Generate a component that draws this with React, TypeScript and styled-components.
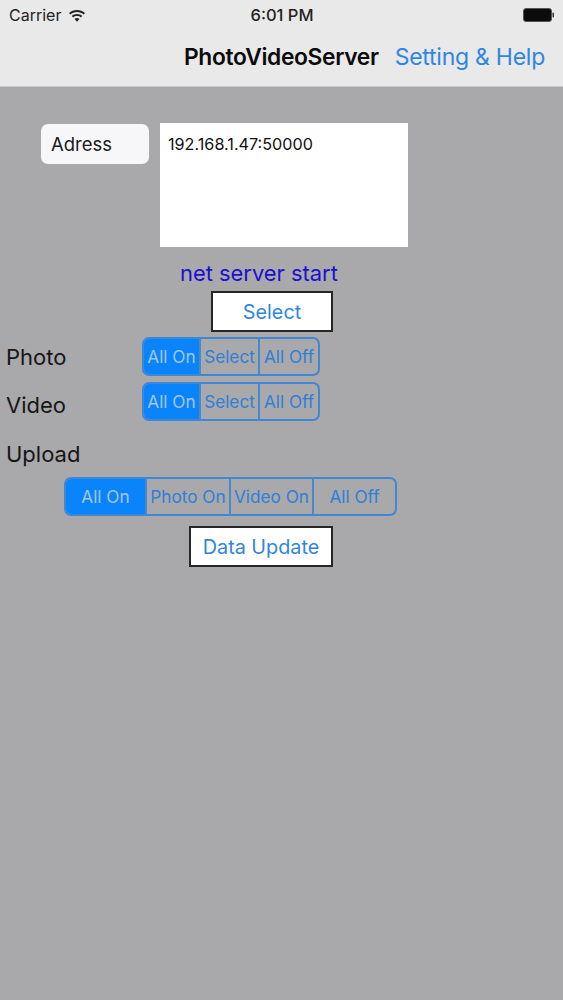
import React from "react";
import styled, { createGlobalStyle } from "styled-components";

const Global = createGlobalStyle`
  html, body { margin: 0; padding: 0; background: #a9a8aa; }
  body { font-family: Inter, "Liberation Sans", sans-serif; }
`;

const Screen = styled.div`
  width: 563px;
  height: 1000px;
  display: flex;
  flex-direction: column;
  background: #a9a8aa;
  overflow: hidden;
`;

const Header = styled.header`
  height: 87px;
  flex: none;
  box-sizing: border-box;
  background: #e9e9ea;
  border-bottom: 1px solid #c9c9ca;
  display: flex;
  flex-direction: column;
`;

const StatusBar = styled.div`
  height: 29px;
  display: grid;
  grid-template-columns: 1fr auto 1fr;
  align-items: center;
  padding: 0 8px 0 9px;
  font-size: 16px;
  color: #222;
`;

const StatusLeft = styled.div`
  display: flex;
  align-items: center;
  gap: 7px;
`;

const StatusTime = styled.div`
  font-weight: 500;
  font-size: 16.5px;
`;

const StatusRight = styled.div`
  display: flex;
  justify-content: flex-end;
`;

const NavBar = styled.nav`
  flex: 1;
  display: flex;
  justify-content: flex-end;
  align-items: center;
  gap: 16px;
  padding: 0 18px 2px 0;
`;

const NavTitle = styled.div`
  font-size: 22.8px;
  font-weight: 600;
  letter-spacing: -0.35px;
  color: #0c0c0c;
`;

const NavAction = styled.div`
  font-size: 23px;
  letter-spacing: -0.25px;
  color: #2f86e0;
`;

const Content = styled.main`
  flex: 1;
  display: flex;
  flex-direction: column;
`;

const AddressRow = styled.div`
  display: flex;
  align-items: flex-start;
  gap: 11px;
  padding: 36px 0 0 41px;
`;

const AddressLabel = styled.div`
  width: 108px;
  height: 40px;
  box-sizing: border-box;
  margin-top: 1px;
  padding-left: 10px;
  display: flex;
  align-items: center;
  background: #f7f7f9;
  border-radius: 7px;
  font-size: 18.5px;
  color: #1a1a1a;
`;

const AddressBox = styled.div`
  width: 248px;
  height: 124px;
  box-sizing: border-box;
  background: #fff;
  padding: 12px 8px;
  font-size: 16.2px;
  line-height: 19px;
  color: #111;
`;

const ServerStatus = styled.div`
  margin: 13px 0 0 180px;
  height: 26px;
  line-height: 26px;
  font-size: 21.9px;
  color: #1c10cf;
  white-space: nowrap;
`;

const BoxButton = styled.div<{ $left: number; $width: number; $top: number }>`
  margin: ${(p) => p.$top}px 0 0 ${(p) => p.$left}px;
  width: ${(p) => p.$width}px;
  height: 41px;
  box-sizing: border-box;
  border: 2px solid #262626;
  background: #fff;
  display: flex;
  align-items: center;
  justify-content: center;
  font-size: 19.8px;
  color: #2f86e0;
`;

const SegmentRow = styled.div<{ $top: number }>`
  display: flex;
  align-items: center;
  height: 39px;
  margin-top: ${(p) => p.$top}px;
  padding-left: 6px;
`;

const RowLabel = styled.div<{ $shift?: number }>`
  width: 136px;
  font-size: 22px;
  color: #161616;
  padding-top: ${(p) => p.$shift ?? 0}px;
`;

const UploadLabel = styled(RowLabel)`
  margin: 20px 0 0 6px;
  height: 27px;
  line-height: 27px;
`;

const Segmented = styled.div<{ $left?: number; $top?: number; $cols: string; $width: number }>`
  width: ${(p) => p.$width}px;
  height: 39px;
  box-sizing: border-box;
  margin: ${(p) => p.$top ?? 0}px 0 0 ${(p) => p.$left ?? 0}px;
  display: grid;
  grid-template-columns: ${(p) => p.$cols};
  border: 2px solid #3f88d8;
  border-radius: 7px;
  overflow: hidden;
`;

const Segment = styled.div<{ $active?: boolean }>`
  display: flex;
  align-items: center;
  justify-content: center;
  white-space: nowrap;
  font-size: 17.2px;
  background: ${(p) => (p.$active ? "#0a84fb" : "transparent")};
  color: ${(p) => (p.$active ? "#a6c4e2" : "#2f7fd8")};
  & + & {
    border-left: 2px solid #4a88cc;
  }
`;

const Wifi = () => (
  <svg width="18" height="14" viewBox="0 0 18 14" fill="#222">
    <path d="M9 2C5.900 2 3.100 3.100 1 5l1.300 1.500C4.100 5 6.400 4 9 4s4.900 1 6.700 2.500L17 5c-2.100-1.900-4.900-3-8-3z" />
    <path d="M9 6c-2 0-3.800.7-5.200 1.900l1.300 1.500C6.100 8.500 7.500 8 9 8s2.900.5 3.900 1.400l1.300-1.500C12.800 6.700 11 6 9 6z" />
    <path d="M9 10c-1 0-1.900.3-2.500.9L9 13.700l2.500-2.800C10.900 10.300 10 10 9 10z" />
  </svg>
);

const Battery = () => (
  <svg width="32" height="14" viewBox="0 0 32 14">
    <rect x="0.500" y="0.500" width="28" height="13" rx="2.500" fill="#0c0c0c" stroke="#555" />
    <rect x="29.500" y="4.500" width="1.500" height="5" rx="0.700" fill="#333" />
  </svg>
);

const triple = "55px 59px 1fr";
const quad = "79px 84px 83px 1fr";

const MediaSegments = () => (
  <Segmented $width={178} $cols={triple}>
    <Segment $active>All On</Segment>
    <Segment>Select</Segment>
    <Segment>All Off</Segment>
  </Segmented>
);

export default function App() {
  return (
    <Screen>
      <Global />
      <Header>
        <StatusBar>
          <StatusLeft>
            Carrier
            <Wifi />
          </StatusLeft>
          <StatusTime>6:01 PM</StatusTime>
          <StatusRight>
            <Battery />
          </StatusRight>
        </StatusBar>
        <NavBar>
          <NavTitle>PhotoVideoServer</NavTitle>
          <NavAction>Setting &amp; Help</NavAction>
        </NavBar>
      </Header>
      <Content>
        <AddressRow>
          <AddressLabel>Adress</AddressLabel>
          <AddressBox>192.168.1.47:50000</AddressBox>
        </AddressRow>
        <ServerStatus>net server start</ServerStatus>
        <BoxButton $left={211} $width={122} $top={5}>
          Select
        </BoxButton>
        <SegmentRow $top={5}>
          <RowLabel>Photo</RowLabel>
          <MediaSegments />
        </SegmentRow>
        <SegmentRow $top={6}>
          <RowLabel $shift={6}>Video</RowLabel>
          <MediaSegments />
        </SegmentRow>
        <UploadLabel>Upload</UploadLabel>
        <Segmented $left={64} $top={9} $width={333} $cols={quad}>
          <Segment $active>All On</Segment>
          <Segment>Photo On</Segment>
          <Segment>Video On</Segment>
          <Segment>All Off</Segment>
        </Segmented>
        <BoxButton $left={189} $width={144} $top={10}>
          Data Update
        </BoxButton>
      </Content>
    </Screen>
  );
}
